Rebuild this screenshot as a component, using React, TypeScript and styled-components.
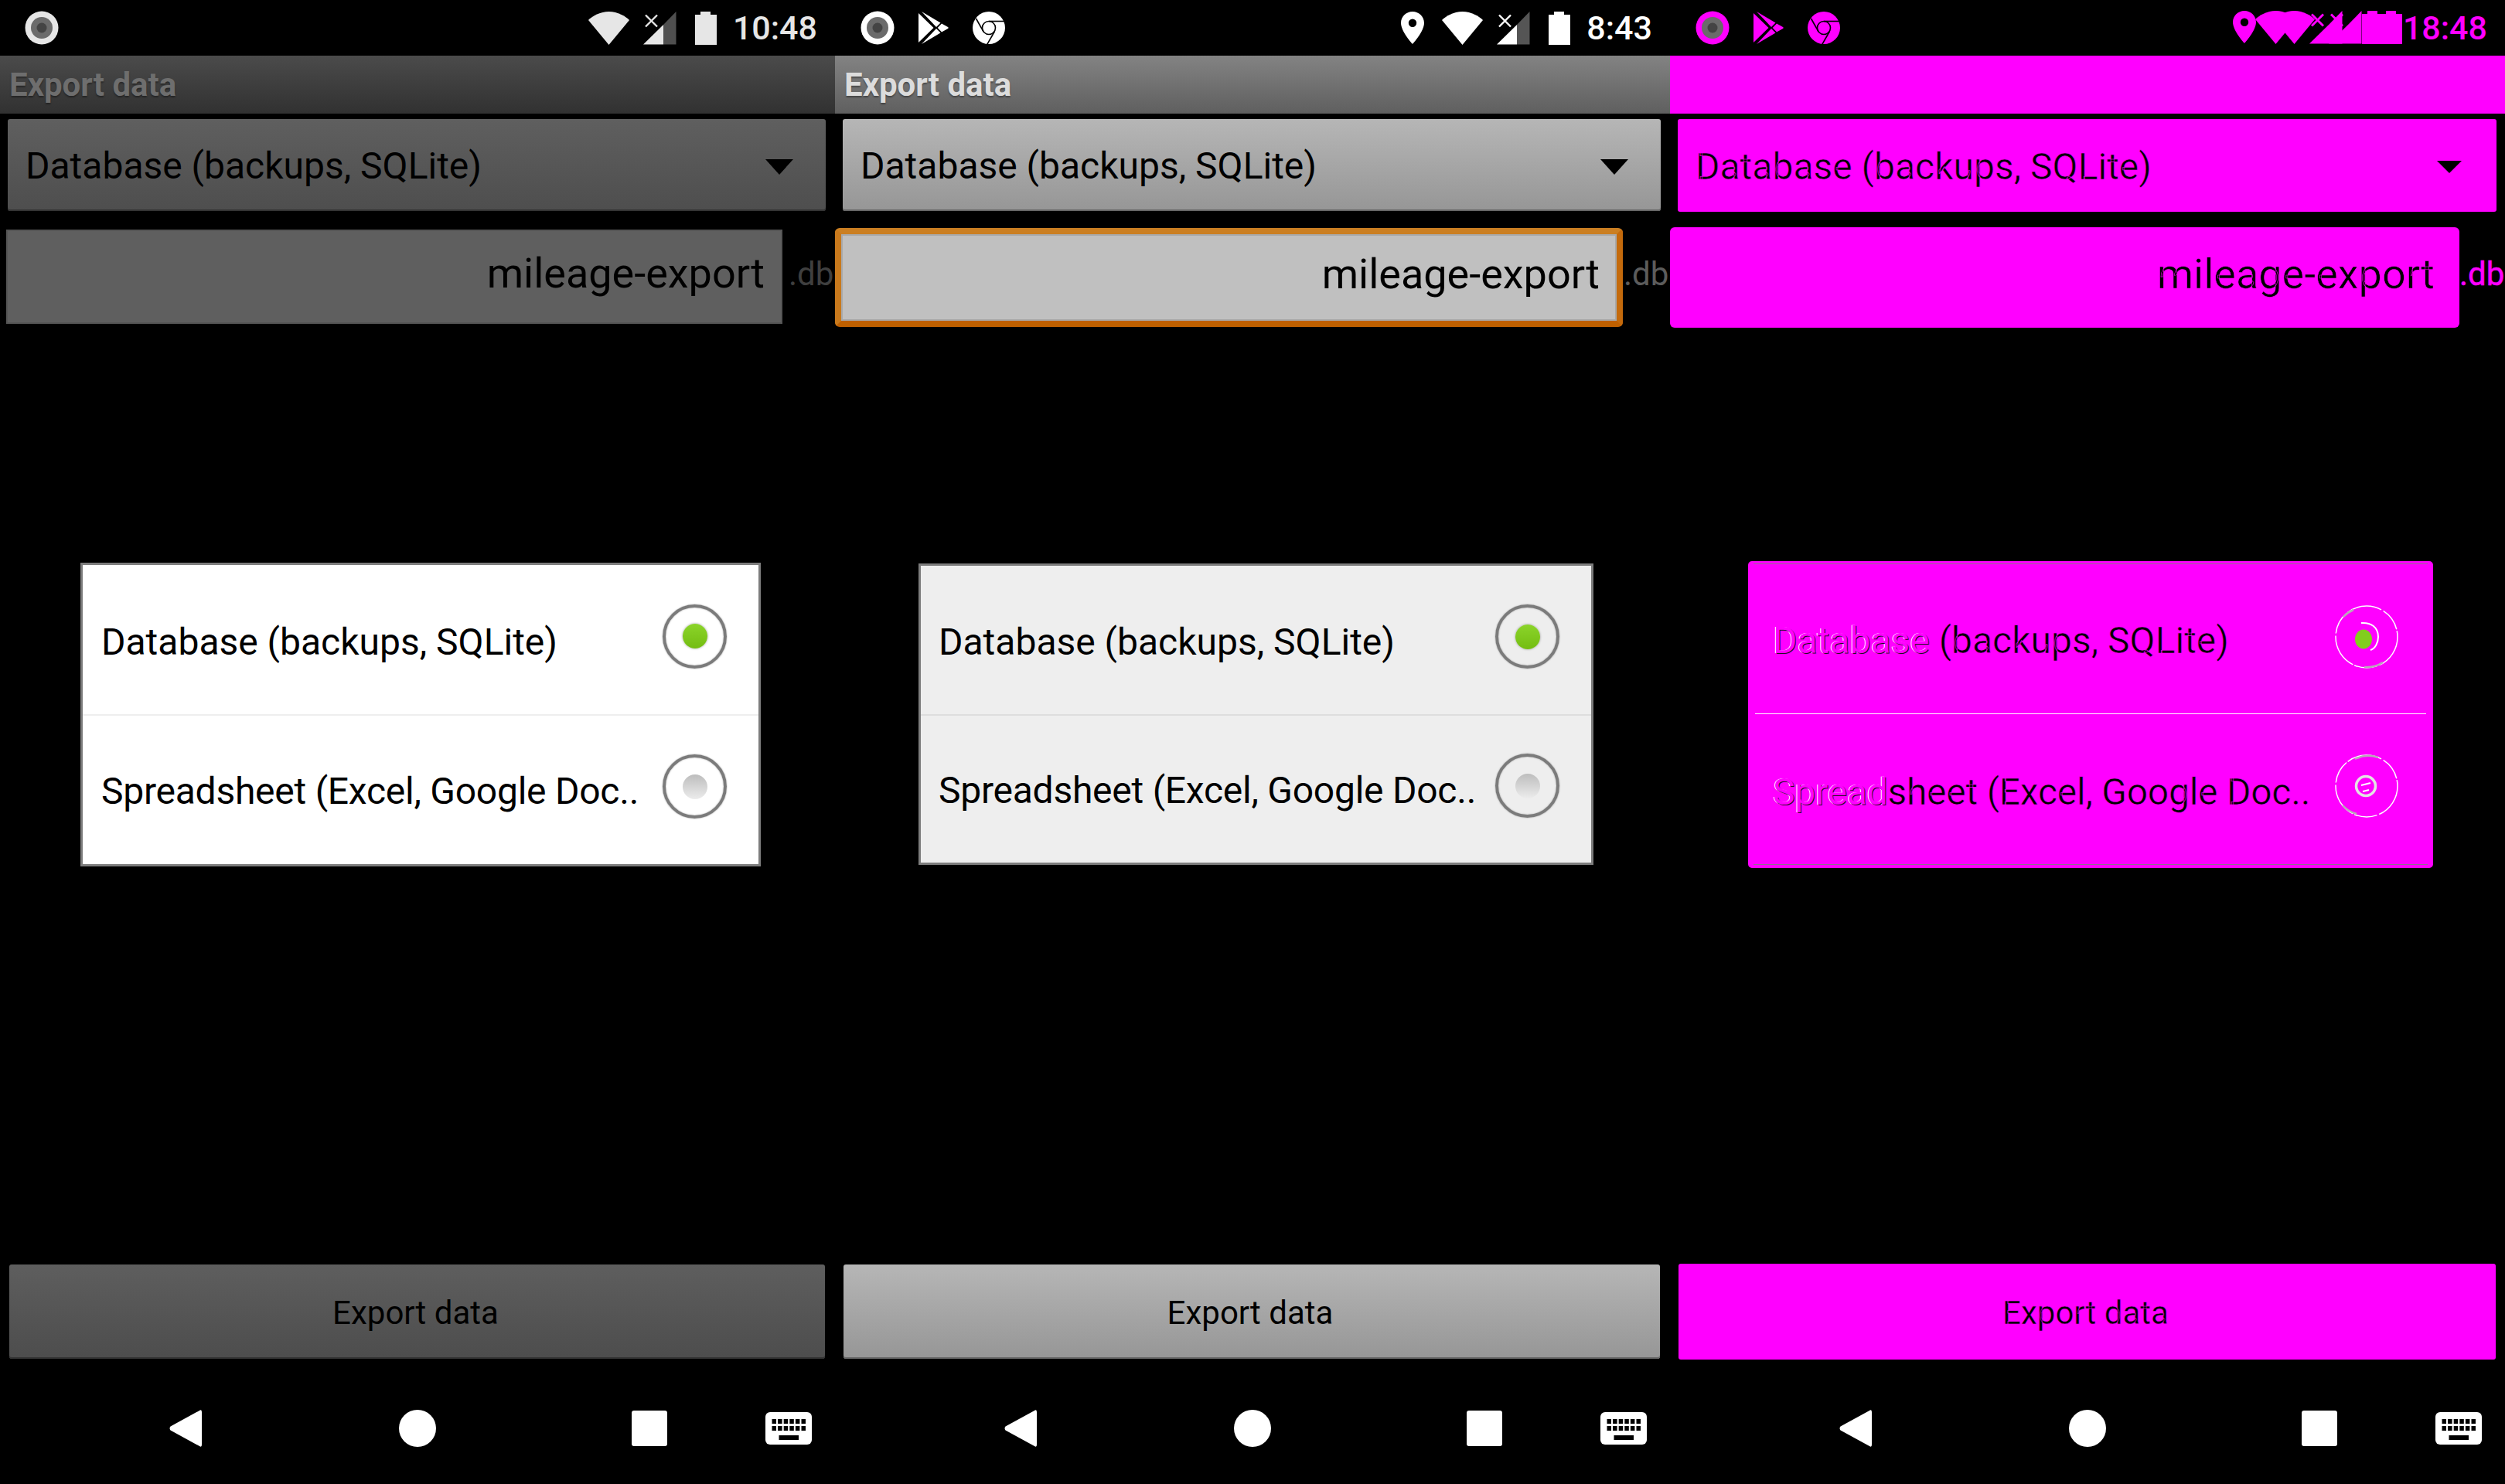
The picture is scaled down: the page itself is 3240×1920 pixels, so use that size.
import * as React from "react";
import styled, { createGlobalStyle, css } from "styled-components";

type Mode = "dim" | "lit" | "diff";

const MAGENTA = "#ff00ff";

const GlobalStyle = createGlobalStyle`
  html, body {
    margin: 0;
    padding: 0;
    background: #000;
  }
  body {
    font-family: Roboto, "Liberation Sans", sans-serif;
  }
`;

const metrics = {
  dim: {
    spinner: [7, 10, 1058, 119],
    edit: [12, 8, 1004, 122],
    editPad: 23,
    dbGap: 8,
    dialog: [278, 104, 880, 393],
    dialogPad: 24,
    firstRow: 195,
    button: [16, 12, 1055, 122]
  },
  lit: {
    spinner: [7, 10, 1058, 119],
    edit: [10, 0, 1019, 128],
    editPad: 22,
    dbGap: 1,
    dialog: [279, 108, 873, 390],
    dialogPad: 23,
    firstRow: 194,
    button: [16, 11, 1056, 122]
  },
  diff: {
    spinner: [7, 10, 1059, 120],
    edit: [9, 0, 1021, 130],
    editPad: 32,
    dbGap: 0,
    dialog: [276, 101, 886, 397],
    dialogPad: 32,
    firstRow: 198,
    button: [15, 11, 1057, 124]
  }
};

const place = (box: number[]) => css`
  margin: ${box[0]}px 0 0 ${box[1]}px;
  width: ${box[2]}px;
  height: ${box[3]}px;
`;

// the third panel is a pixel diff, only the core of a glyph stays black
const diffText = css<{ $mode: Mode }>`
  ${p => p.$mode === "diff" && `-webkit-text-stroke: 0.6px ${MAGENTA};`}
`;

const Screen = styled.div`
  display: flex;
  width: 3240px;
  height: 1920px;
  overflow: hidden;
  background: #000;
`;

const Panel = styled.div`
  display: flex;
  flex-direction: column;
  width: 1080px;
  height: 1920px;
`;

const StatusBar = styled.div<{ $pad: number }>`
  display: flex;
  align-items: center;
  justify-content: space-between;
  height: 72px;
  padding: 0 23px 0 ${p => p.$pad}px;
  box-sizing: border-box;
`;

const StatusGroup = styled.div`
  display: flex;
  align-items: center;
  gap: 31px;
`;

const StatusRight = styled.div`
  display: flex;
  align-items: center;
`;

const StatusIcon = styled.svg<{ $gap?: number }>`
  display: block;
  margin-right: ${p => p.$gap || 0}px;
`;

const Clock = styled.span<{ $color: string }>`
  color: ${p => p.$color};
  font-size: 43px;
  font-weight: 500;
  line-height: 72px;
  white-space: nowrap;
`;

const TitleBar = styled.div<{ $mode: Mode }>`
  display: flex;
  align-items: center;
  height: 75px;
  padding-left: 12px;
  box-sizing: border-box;
  font-size: 42px;
  font-weight: 700;
  text-shadow: 0 2px 2px rgba(0, 0, 0, 0.35);
  ${p =>
    p.$mode === "dim" &&
    "background: linear-gradient(#4b4b4b, #313131); color: #6e6e6e;"}
  ${p =>
    p.$mode === "lit" &&
    "background: linear-gradient(#838383, #5f5f5f); color: #dcdcdc;"}
  ${p => p.$mode === "diff" && `background: ${MAGENTA}; color: ${MAGENTA}; text-shadow: none;`}
`;

const SpinnerSlot = styled.div`
  height: 138px;
`;

const Spinner = styled.div<{ $mode: Mode }>`
  ${p => place(metrics[p.$mode].spinner)}
  display: flex;
  align-items: center;
  justify-content: space-between;
  box-sizing: border-box;
  padding: 2px 42px 0 23px;
  border-radius: 3px;
  color: #000;
  font-size: 48px;
  white-space: nowrap;
  ${diffText}
  ${p =>
    p.$mode === "dim" &&
    "background: linear-gradient(#5f5f5f, #4e4e4e); box-shadow: inset 0 -2px 0 #333;"}
  ${p =>
    p.$mode === "lit" &&
    "background: linear-gradient(#b6b6b6, #969696); box-shadow: inset 0 -2px 0 #666;"}
  ${p => p.$mode === "diff" && `background: ${MAGENTA};`}
`;

const Arrow = styled.span<{ $mode: Mode }>`
  width: 0;
  height: 0;
  margin-top: 2px;
  border-left: ${p => (p.$mode === "diff" ? 16 : 18)}px solid transparent;
  border-right: ${p => (p.$mode === "diff" ? 16 : 18)}px solid transparent;
  border-top: ${p => (p.$mode === "diff" ? 16 : 20)}px solid #000;
  ${p => p.$mode === "diff" && "margin-right: 3px;"}
`;

const EditSlot = styled.div`
  display: flex;
  align-items: flex-start;
  height: 165px;
`;

const EditBox = styled.div<{ $mode: Mode }>`
  ${p => place(metrics[p.$mode].edit)}
  flex: none;
  display: flex;
  align-items: center;
  justify-content: flex-end;
  box-sizing: border-box;
  padding-right: ${p => metrics[p.$mode].editPad}px;
  padding-bottom: 10px;
  color: #000;
  font-size: 54px;
  white-space: nowrap;
  ${diffText}
  ${p => p.$mode === "dim" && "background: #5f5f5f; box-shadow: inset 0 0 0 2px #555;"}
  ${p =>
    p.$mode === "lit" &&
    `background: #c0c0c0;
     border: solid 8px;
     border-color: #cb7f22 #c46a0c #bf6000 #c8791c;
     border-radius: 6px;
     box-shadow: inset 0 0 0 2px #a9a9a9;`}
  ${p => p.$mode === "diff" && `background: ${MAGENTA}; border-radius: 6px;`}
`;

const Extension = styled.span<{ $mode: Mode }>`
  margin: 45px 0 0 ${p => metrics[p.$mode].dbGap}px;
  font-size: 42px;
  ${p => p.$mode === "dim" && "color: #3f3f3f;"}
  ${p => p.$mode === "lit" && "color: #5c5c5c;"}
  ${p => p.$mode === "diff" && `color: ${MAGENTA}; -webkit-text-stroke: 0.5px ${MAGENTA};`}
`;

const DialogSlot = styled.div`
  flex: 1;
`;

const Dialog = styled.div<{ $mode: Mode }>`
  ${p => place(metrics[p.$mode].dialog)}
  position: relative;
  box-sizing: border-box;
  ${p => p.$mode === "dim" && "background: #fff; border: 3px solid #7d7d7d;"}
  ${p => p.$mode === "lit" && "background: #eee; border: 3px solid #7d7d7d;"}
  ${p => p.$mode === "diff" && `background: ${MAGENTA}; border-radius: 5px;`}
`;

const EdgeLine = styled.div<{ $bottom?: boolean }>`
  position: absolute;
  left: 7px;
  right: 7px;
  height: 1px;
  background: #8f6f8f;
  ${p => (p.$bottom ? "bottom: 4px;" : "top: 3px;")}
`;

const OptionRow = styled.div<{ $mode: Mode; $first?: boolean }>`
  display: flex;
  align-items: center;
  justify-content: space-between;
  box-sizing: border-box;
  height: ${p => (p.$first ? `${metrics[p.$mode].firstRow}px` : "auto")};
  padding: 0 41px 0 ${p => metrics[p.$mode].dialogPad}px;
  ${p => !p.$first && "flex: 1;"}
  ${p => p.$first && p.$mode === "dim" && "border-bottom: 2px solid #eee;"}
  ${p => p.$first && p.$mode === "lit" && "border-bottom: 2px solid #ddd;"}
  ${p => p.$first && p.$mode === "diff" && "border-bottom: 1px solid #fff;"}
  ${p => p.$first && p.$mode === "diff" && "margin: 0 9px;padding: 0 32px 0 23px;"}
`;

const OptionBody = styled.div`
  display: flex;
  flex-direction: column;
  height: 100%;
`;

const OptionLabel = styled.span<{ $mode: Mode; $tight?: boolean }>`
  color: #000;
  font-size: 48px;
  letter-spacing: ${p => (p.$tight ? -0.25 : 0)}px;
  line-height: 64px;
  margin-top: ${p => (p.$tight ? 3 : p.$mode === "diff" ? 8 : 6)}px;
  white-space: nowrap;
  ${diffText}
`;

const GhostText = styled.span`
  color: ${MAGENTA};
  -webkit-text-stroke: 0;
  text-shadow: 1px 1px 0 #201020, -1px 0 0 #fff;
`;

const Radio = styled.div`
  flex: none;
  display: flex;
  align-items: center;
  justify-content: center;
  width: 83px;
  height: 83px;
  margin-top: -9px;
  box-sizing: border-box;
  border-radius: 50%;
  border: 4px solid #7b7b7b;
  box-shadow: 0 0 2px #999, inset 0 0 2px #aaa;
`;

const RadioDot = styled.div<{ $on: boolean }>`
  width: 32px;
  height: 32px;
  border-radius: 50%;
  ${p =>
    p.$on
      ? "background: linear-gradient(#8bd42a, #74bd12); box-shadow: 0 0 3px #999;"
      : "background: linear-gradient(#bdbdbd, #ececec);"}
`;

const DiffRadioIcon = styled.svg<{ $lift: number }>`
  flex: none;
  display: block;
  margin-top: ${p => p.$lift}px;
`;

const ButtonSlot = styled.div`
  height: 170px;
`;

const ActionButton = styled.div<{ $mode: Mode }>`
  ${p => place(metrics[p.$mode].button)}
  display: flex;
  align-items: center;
  justify-content: center;
  box-sizing: border-box;
  padding: 2px 4px 0 0;
  color: #000;
  font-size: 42px;
  border-radius: 3px;
  ${p => p.$mode === "diff" && `-webkit-text-stroke: 0.4px ${MAGENTA};`}
  ${p =>
    p.$mode === "dim" &&
    "background: linear-gradient(#5e5e5e, #4d4d4d); box-shadow: inset 0 -2px 0 #333;"}
  ${p =>
    p.$mode === "lit" &&
    "background: linear-gradient(#b6b6b6, #969696); box-shadow: inset 0 -2px 0 #666;"}
  ${p => p.$mode === "diff" && `background: ${MAGENTA};`}
`;

const NavBar = styled.div`
  display: flex;
  align-items: center;
  height: 130px;
  padding: 0 0 14px 219px;
  box-sizing: border-box;
`;

const NavIcon = styled.svg<{ $gap?: number }>`
  display: block;
  flex: none;
  margin-left: ${p => p.$gap || 0}px;
`;

const WIFI = "M26.5 43L53 11C48 6 38 0 26.5 0S5 6 0 11z";
const SIGNAL_LOW = "M0 42.5L26 17V42.5z";
const SIGNAL_HIGH = "M26 17L42.5 0V42.5H26z";
const BATTERY = "M7 0h13v4h8v39H0V4h7z";
const PIN =
  "M15 0C6.7 0 0 6.6 0 14.7 0 25.7 15 42 15 42s15-16.3 15-27.3C30 6.6 23.3 0 15 0zm0 20a5.2 5.2 0 1 1 0-10.400a5.2 5.2 0 0 1 0 10.400z";

function NotifyDot({ color }: { color: string }) {
  return (
    <StatusIcon width={44} height={44} viewBox="0 0 44 44">
      <circle cx="22" cy="22" r="21.500" fill={color} />
      <circle cx="22" cy="22" r="14" fill="#6b6b6b" />
      <circle cx="22" cy="22" r="6.500" fill="#444" />
    </StatusIcon>
  );
}

function PlayIcon({ color }: { color: string }) {
  return (
    <StatusIcon width={39} height={42} viewBox="0 0 39 42">
      <path d="M0 2V40L19.500 21z" fill={color} />
      <path d="M4 0L28.500 14.500 23 20z" fill={color} />
      <path d="M30 15.500L38.500 20.300V21.700L30 26.500 24.700 21z" fill={color} />
      <path d="M4 42L28.500 27.500 23 22z" fill={color} />
    </StatusIcon>
  );
}

function ChromeIcon({ color }: { color: string }) {
  return (
    <StatusIcon width={42} height={44} viewBox="0 0 42 44">
      <circle cx="21" cy="22" r="21" fill={color} />
      <g fill="none" stroke="#000" strokeWidth="1.600">
        <circle cx="21" cy="22" r="8.500" />
        <path d="M21 13.500H41" />
        <path d="M4.500 10L13.800 26.500" />
        <path d="M28.500 26.500L18.500 44" />
      </g>
    </StatusIcon>
  );
}

function StatusIcons({
  color,
  shade,
  pin
}: {
  color: string;
  shade: string;
  pin?: boolean;
}) {
  return (
    <StatusRight>
      {pin && (
        <StatusIcon width={30} height={42} viewBox="0 0 30 42" $gap={23}>
          <path d={PIN} fill={color} fillRule="evenodd" />
        </StatusIcon>
      )}
      <StatusIcon width={53} height={43} viewBox="0 0 53 43" $gap={18}>
        <path d={WIFI} fill={color} />
      </StatusIcon>
      <StatusIcon width={43} height={43} viewBox="0 0 43 43" $gap={24}>
        <path d={SIGNAL_LOW} fill={color} />
        <path d={SIGNAL_HIGH} fill={shade} />
        <path
          d="M3 4.500L18 19.500M18 4.500L3 19.500"
          stroke={color}
          strokeWidth="2.400"
        />
      </StatusIcon>
      <StatusIcon width={28} height={43} viewBox="0 0 28 43" $gap={21}>
        <path d={BATTERY} fill={color} />
      </StatusIcon>
      <Clock $color={color}>{pin ? "8:43" : "10:48"}</Clock>
    </StatusRight>
  );
}

// both status bars laid on top of each other, as the diff shows them
function OverlappedStatusIcons() {
  const c = MAGENTA;
  return (
    <StatusIcon width={220} height={44} viewBox="0 0 220 44">
      <path d={PIN} fill={c} fillRule="evenodd" />
      <g transform="translate(29)">
        <path d={WIFI} fill={c} />
      </g>
      <g transform="translate(53)">
        <path d={WIFI} fill={c} />
      </g>
      <g transform="translate(99)">
        <path d={SIGNAL_LOW} fill={c} />
        <path d={SIGNAL_HIGH} fill={c} />
        <path d="M3 4.500L18 19.500M18 4.500L3 19.500" stroke={c} strokeWidth="3" />
      </g>
      <g transform="translate(124)">
        <path d={SIGNAL_LOW} fill={c} />
        <path d={SIGNAL_HIGH} fill={c} />
        <path d="M3 4.500L18 19.500M18 4.500L3 19.500" stroke={c} strokeWidth="3" />
      </g>
      <g transform="translate(167)">
        <path d={BATTERY} fill={c} />
      </g>
      <g transform="translate(191)">
        <path d={BATTERY} fill={c} />
      </g>
    </StatusIcon>
  );
}

function DiffRadio({ on }: { on: boolean }) {
  return (
    <DiffRadioIcon $lift={on ? -2 : -14} width={90} height={90} viewBox="0 0 90 90">
      <circle
        cx="45"
        cy="45"
        r="40"
        fill="none"
        stroke="#fff"
        strokeWidth="1.500"
        strokeDasharray="46 3 30 2"
      />
      <path
        d={on ? "M15 19A38 38 0 0 1 28 10" : "M30 10A38 38 0 0 1 60 8"}
        fill="none"
        stroke="#b9a9b9"
        strokeWidth="2.500"
      />
      <path
        d={on ? "M66 78A38 38 0 0 1 42 84" : "M14 70A38 38 0 0 0 32 81"}
        fill="none"
        stroke="#b9a9b9"
        strokeWidth="2.500"
      />
      {on ? (
        <>
          <path
            d="M38 27C50 26 60 32 60 45 60 53 56 60 50 62"
            fill="none"
            stroke="#fff"
            strokeWidth="2"
          />
          <ellipse cx="41" cy="48" rx="11" ry="12.500" fill="#82cd1e" />
        </>
      ) : (
        <>
          <circle
            cx="44"
            cy="45"
            r="12.500"
            fill="none"
            stroke="#e4e4e4"
            strokeWidth="3.500"
          />
          <path
            d="M38 44L50 41M40 52L48 50"
            stroke="#fff"
            strokeWidth="2"
            fill="none"
          />
        </>
      )}
    </DiffRadioIcon>
  );
}

function NavIcons() {
  return (
    <NavBar>
      <NavIcon width={42} height={48} viewBox="0 0 42 48">
        <path
          d="M39 1Q42 -1 42 3V45Q42 49 39 47L1.500 26.500Q-0.500 24 1.500 21.500Z"
          fill="#fff"
        />
      </NavIcon>
      <NavIcon width={48} height={48} viewBox="0 0 48 48" $gap={255}>
        <circle cx="24" cy="24" r="24" fill="#fff" />
      </NavIcon>
      <NavIcon width={46} height={46} viewBox="0 0 46 46" $gap={253}>
        <rect width="46" height="46" rx="3" fill="#fff" />
      </NavIcon>
      <NavIcon width={60} height={42} viewBox="0 0 60 42" $gap={127}>
        <rect width="60" height="42" rx="6" fill="#fff" />
        {[0, 1, 2, 3, 4, 5].map(i => (
          <React.Fragment key={i}>
            <rect x={8.5 + i * 7.6} y="9" width="5.500" height="6" fill="#000" />
            <rect x={8.5 + i * 7.6} y="18" width="5.500" height="6" fill="#000" />
          </React.Fragment>
        ))}
        <rect x="17.500" y="30" width="25.500" height="6" fill="#000" />
      </NavIcon>
    </NavBar>
  );
}

function PhonePanel({ mode }: { mode: Mode }) {
  const statusColor = mode === "dim" ? "#e6e6e6" : mode === "lit" ? "#fff" : MAGENTA;
  const showApps = mode !== "dim";
  return (
    <Panel>
      <StatusBar $pad={mode === "dim" ? 32 : 33}>
        <StatusGroup>
          <NotifyDot color={statusColor} />
          {showApps && <PlayIcon color={statusColor} />}
          {showApps && <ChromeIcon color={statusColor} />}
        </StatusGroup>
        {mode === "diff" ? (
          <StatusRight>
            <OverlappedStatusIcons />
            <Clock $color={MAGENTA}>18:48</Clock>
          </StatusRight>
        ) : (
          <StatusIcons
            color={statusColor}
            shade={mode === "dim" ? "#4f4f4f" : "#555"}
            pin={mode === "lit"}
          />
        )}
      </StatusBar>
      <TitleBar $mode={mode}>Export data</TitleBar>
      <SpinnerSlot>
        <Spinner $mode={mode}>
          Database (backups, SQLite)
          <Arrow $mode={mode} />
        </Spinner>
      </SpinnerSlot>
      <EditSlot>
        <EditBox $mode={mode}>mileage-export</EditBox>
        <Extension $mode={mode}>.db</Extension>
      </EditSlot>
      <DialogSlot>
        <Dialog $mode={mode}>
          {mode === "diff" && <EdgeLine />}
          {mode === "diff" && <EdgeLine $bottom />}
          <OptionBody>
            <OptionRow $mode={mode} $first>
              <OptionLabel $mode={mode}>
                {mode === "diff" ? (
                  <>
                    <GhostText>Database</GhostText> (backups, SQLite)
                  </>
                ) : (
                  "Database (backups, SQLite)"
                )}
              </OptionLabel>
              {mode === "diff" ? (
                <DiffRadio on />
              ) : (
                <Radio>
                  <RadioDot $on />
                </Radio>
              )}
            </OptionRow>
            <OptionRow $mode={mode}>
              <OptionLabel $mode={mode} $tight>
                {mode === "diff" ? (
                  <>
                    <GhostText>Spread</GhostText>sheet (Excel, Google Doc..
                  </>
                ) : (
                  "Spreadsheet (Excel, Google Doc.."
                )}
              </OptionLabel>
              {mode === "diff" ? (
                <DiffRadio on={false} />
              ) : (
                <Radio>
                  <RadioDot $on={false} />
                </Radio>
              )}
            </OptionRow>
          </OptionBody>
        </Dialog>
      </DialogSlot>
      <ButtonSlot>
        <ActionButton $mode={mode}>Export data</ActionButton>
      </ButtonSlot>
      <NavIcons />
    </Panel>
  );
}

export default function App() {
  return (
    <Screen>
      <GlobalStyle />
      <PhonePanel mode="dim" />
      <PhonePanel mode="lit" />
      <PhonePanel mode="diff" />
    </Screen>
  );
}
